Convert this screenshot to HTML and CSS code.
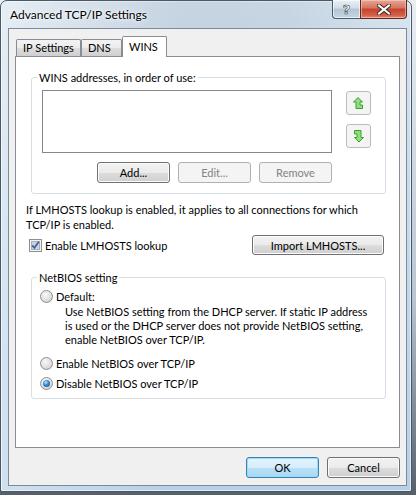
FILE: index.html
```html
<!DOCTYPE html>
<html>
<head>
<meta charset="utf-8">
<link rel="stylesheet" href="styles.css">
</head>
<body>
<div class="window">
  <div class="titlebar">
    <span class="title">Advanced TCP/IP Settings</span>
    <div class="caption">
      <div class="cap-btn help"><span class="qmark">?</span></div>
      <div class="cap-btn close">
        <svg width="14" height="11" viewBox="0 0 14 11"><path d="M2 1.5 L12 9.5 M12 1.5 L2 9.5" stroke="#3a2a28" stroke-width="4" stroke-linecap="square"/><path d="M2 1.5 L12 9.5 M12 1.5 L2 9.5" stroke="#ffffff" stroke-width="2" stroke-linecap="square"/></svg>
      </div>
    </div>
  </div>
  <div class="client">
    <div class="tabs">
      <div class="tab t-ip">IP Settings</div>
      <div class="tab t-dns">DNS</div>
      <div class="tab t-wins active">WINS</div>
    </div>
    <div class="page">
      <fieldset class="group g-wins">
        <legend>WINS addresses, in order of use:</legend>
        <div class="list-row">
          <div class="listbox"></div>
          <div class="arrows">
            <div class="arrow-btn">
              <svg width="11" height="13" viewBox="0 0 11 13"><path d="M5 0.5 L9.5 5 L7 5 L7 8 L9.5 8 L9.5 11.5 L3 11.5 L3 5 L0.5 5 Z" fill="#8ee07b" stroke="#3f9e35" stroke-width="1" stroke-linejoin="miter"/></svg>
            </div>
            <div class="arrow-btn">
              <svg width="11" height="13" viewBox="0 0 11 13"><path d="M1.5 0.5 L8 0.5 L8 7.5 L10.5 7.5 L6 12 L1.5 7.5 L4 7.5 L4 4 L1.5 4 Z" fill="#8ee07b" stroke="#3f9e35" stroke-width="1" stroke-linejoin="miter"/></svg>
            </div>
          </div>
        </div>
        <div class="btn-row">
          <button class="btn">Add...</button>
          <button class="btn disabled">Edit...</button>
          <button class="btn disabled">Remove</button>
        </div>
      </fieldset>
      <p class="note">If LMHOSTS lookup is enabled, it applies to all connections for which<br>TCP/IP is enabled.</p>
      <div class="lm-row">
        <label class="check">
          <span class="cbox">
            <svg width="13" height="13" viewBox="0 0 13 13"><rect x="0.5" y="0.5" width="12" height="12" fill="#f4f4f4" stroke="#8e8f8f"/><rect x="2.5" y="2.5" width="8" height="8" fill="#c9d3e2" stroke="#a6b0c2"/><path d="M3.2 6.3 L5.4 8.8 L9.8 2.8" fill="none" stroke="#4a5f97" stroke-width="1.8"/></svg>
          </span>
          Enable LMHOSTS lookup
        </label>
        <button class="btn wide">Import LMHOSTS...</button>
      </div>
      <fieldset class="group g-netbios">
        <legend>NetBIOS setting</legend>
        <div class="radio-row first"><span class="radio"></span>Default:</div>
        <p class="desc">Use NetBIOS setting from the DHCP server. If static IP address<br>is used or the DHCP server does not provide NetBIOS setting,<br>enable NetBIOS over TCP/IP.</p>
        <div class="radio-row r-enable"><span class="radio"></span>Enable NetBIOS over TCP/IP</div>
        <div class="radio-row r-disable"><span class="radio on"></span>Disable NetBIOS over TCP/IP</div>
      </fieldset>
    </div>
    <div class="footer">
      <button class="btn default">OK</button>
      <button class="btn">Cancel</button>
    </div>
  </div>
</div>
</body>
</html>
```
FILE: styles.css
```css
html, body {
  margin: 0;
  padding: 0;
}
body {
  width: 416px;
  height: 495px;
  overflow: hidden;
  background: linear-gradient(to bottom, #e9eef3 0%, #b9c6d2 60%, #55606b 100%);
  font-family: "Lato", "Open Sans", sans-serif;
  font-size: 11px;
  color: #000;
}
.window {
  width: 412px;
  height: 492px;
  box-sizing: border-box;
  border: 1px solid #4b5866;
  border-radius: 7px 7px 2px 2px;
  padding: 0 4px 5px 7px;
  display: flex;
  flex-direction: column;
  background:
    linear-gradient(to right, rgba(255,255,255,0.35), rgba(255,255,255,0) 40%),
    linear-gradient(to bottom, #d8e4ef 0%, #c7dbee 40%, #b6d0e9 100%);
  box-shadow: inset 0 0 0 1px rgba(255,255,255,0.6);
}
.titlebar {
  height: 27px;
  display: flex;
  justify-content: space-between;
  align-items: flex-start;
  background: linear-gradient(to right, rgba(255,255,255,0) 0%, rgba(120,140,160,0.18) 45%, rgba(80,110,140,0.12) 70%, rgba(255,255,255,0) 100%);
}
.title {
  margin-top: 6px;
  margin-left: 2px;
  font-size: 12px;
  line-height: 15px;
  color: #000;
  text-shadow: 0 0 6px #fff, 0 0 3px #fff;
}
.caption {
  display: flex;
  margin-top: -1px;
}
.cap-btn {
  height: 19px;
  box-sizing: border-box;
  border: 1px solid #4d5c6d;
  border-top: none;
  display: flex;
  align-items: center;
  justify-content: center;
}
.help {
  width: 28px;
  border-radius: 0 0 0 4px;
  border-right: none;
  background: linear-gradient(to bottom, #e9eff5 0%, #d2dde8 45%, #b4c4d4 50%, #c6d5e2 100%);
  box-shadow: inset 0 0 0 1px rgba(255,255,255,0.6);
}
.qmark {
  font-family: "DejaVu Sans", sans-serif;
  font-weight: bold;
  font-size: 13px;
  line-height: 13px;
  color: #fff;
  -webkit-text-stroke: 0.6px #3a4450;
  margin-top: 1px;
}
.close {
  width: 47px;
  border-radius: 0 0 4px 0;
  border-color: #5a2a22;
  background: linear-gradient(to bottom, #e8a596 0%, #d7735f 45%, #c3432a 50%, #d4604a 85%, #e88d6e 100%);
  box-shadow: inset 0 0 0 1px rgba(255,220,210,0.5);
}
.close svg { display: block; }
.client {
  flex: 1;
  border: 1px solid #7d8b99;
  background: #f0f0f0;
  display: flex;
  flex-direction: column;
}
.tabs {
  height: 27px;
  display: flex;
  align-items: flex-end;
  padding-left: 7px;
  position: relative;
  z-index: 1;
}
.tab {
  box-sizing: border-box;
  height: 17px;
  border: 1px solid #898c95;
  border-bottom: none;
  border-radius: 2px 2px 0 0;
  background: linear-gradient(to bottom, #f3f3f3 0%, #ebebeb 50%, #dddddd 51%, #cfcfcf 100%);
  line-height: 15px;
  padding-left: 6px;
}
.t-ip { width: 65px; }
.t-dns { width: 41px; }
.t-wins { width: 45px; }
.tab.active {
  height: 21px;
  margin-bottom: -1px;
  background: #fff;
  padding-left: 6px;
  line-height: 19px;
}
.page {
  margin: 0 6px;
  height: 392px;
  box-sizing: border-box;
  border: 1px solid #898c95;
  background: #fff;
  padding: 13px 13px 0 10px;
}
.group {
  margin: 0 0 0 5px;
  border: 1px solid #d5dfe5;
  border-radius: 3px;
  min-width: 0;
}
.group legend {
  padding: 0 2px;
  line-height: 15px;
}
.g-wins {
  padding: 5px 0 10px 10px;
}
.g-wins legend { margin-left: -5px; }
.list-row {
  display: flex;
  align-items: flex-start;
}
.listbox {
  width: 290px;
  height: 63px;
  box-sizing: border-box;
  border: 1px solid #828790;
  background: #fff;
}
.arrows {
  display: flex;
  flex-direction: column;
  gap: 9px;
  margin-left: 14px;
  margin-top: 1px;
}
.arrow-btn {
  width: 25px;
  height: 24px;
  box-sizing: border-box;
  border: 1px solid #b8bcbf;
  border-radius: 3px;
  background: #f4f4f4;
  display: flex;
  align-items: center;
  justify-content: center;
}
.btn-row {
  display: flex;
  justify-content: flex-end;
  gap: 8px;
  width: 290px;
  margin-top: 9px;
}
.btn {
  width: 73px;
  height: 21px;
  box-sizing: border-box;
  border: 1px solid #707070;
  border-radius: 3px;
  background: linear-gradient(to bottom, #f2f2f2 0%, #ebebeb 50%, #dddddd 51%, #cfcfcf 100%);
  box-shadow: inset 0 0 0 1px #fbfbfb;
  font: inherit;
  color: #000;
  padding: 0;
  line-height: 17px;
}
.btn.disabled {
  border-color: #adb2b5;
  background: #f4f4f4;
  box-shadow: none;
  color: #838383;
}
.btn.default {
  border-color: #3c7fb1;
  background: linear-gradient(to bottom, #e5f4fc 0%, #d5edfa 50%, #b9e1f8 51%, #a8d8f3 100%);
  box-shadow: inset 0 0 0 1px #98dcf6;
}
.btn.wide {
  width: 132px;
  height: 20px;
}
.note {
  margin: 8px 0 0 0;
  line-height: 15px;
  white-space: nowrap;
}
.lm-row {
  display: flex;
  justify-content: space-between;
  align-items: center;
  margin-top: 3px;
  padding-right: 2px;
}
.check {
  display: flex;
  align-items: center;
  gap: 3px;
  margin-left: 3px;
}
.cbox svg { display: block; }
.g-netbios {
  margin-top: 15px;
  padding: 4px 0 7px 8px;
}
.g-netbios legend { margin-left: -3px; }
.radio-row {
  display: flex;
  align-items: center;
  line-height: 15px;
  gap: 3px;
  white-space: nowrap;
}
.radio {
  width: 13px;
  height: 13px;
  box-sizing: border-box;
  border-radius: 50%;
  border: 1px solid #8e8f8f;
  background: radial-gradient(circle at 40% 35%, #fafafa 0%, #e4e4e4 45%, #c9c9c9 100%);
  position: relative;
}
.radio.on::after {
  content: "";
  position: absolute;
  left: 2px;
  top: 2px;
  width: 7px;
  height: 7px;
  border-radius: 50%;
  background: radial-gradient(circle at 40% 35%, #bfe4ff 0%, #2f86d0 45%, #0d4a8c 100%);
}
.desc {
  margin: 1px 0 0 25px;
  line-height: 14px;
  white-space: nowrap;
}
.r-enable { margin-top: 9px; }
.r-disable { margin-top: 5px; }
.footer {
  display: flex;
  justify-content: flex-end;
  gap: 8px;
  margin-top: 9px;
  padding-right: 6px;
}
```
